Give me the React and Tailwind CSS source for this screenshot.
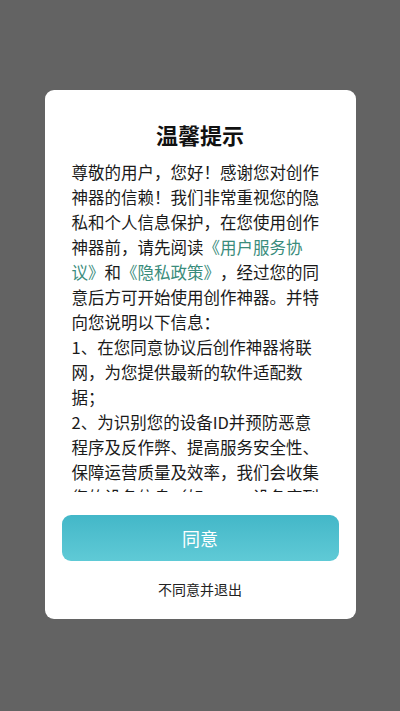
const LINK = "text-[#3a8c7c]";

const lines = [
  ["尊敬的用户，您好！感谢您对创作"],
  ["神器的信赖！我们非常重视您的隐"],
  ["私和个人信息保护，在您使用创作"],
  ["神器前，请先阅读", { link: "《用户服务协" }],
  [{ link: "议》" }, "和", { link: "《隐私政策》" }, "，经过您的同"],
  ["意后方可开始使用创作神器。并特"],
  ["向您说明以下信息："],
  ["1、在您同意协议后创作神器将联"],
  ["网，为您提供最新的软件适配数"],
  ["据；"],
  ["2、为识别您的设备ID并预防恶意"],
  ["程序及反作弊、提高服务安全性、"],
  ["保障运营质量及效率，我们会收集"],
  ["您的设备信息（如IMEI、设备序列"],
];

export default function App() {
  const font = { fontFamily: '"Noto Sans CJK SC", "Noto Sans", sans-serif' };
  return (
    <div className="w-[400px] h-[711px] bg-[#636363] flex justify-center items-start pt-[90px]" style={font}>
      <div className="w-[311px] bg-white rounded-[9px] flex flex-col">
        <h1 className="pt-[30px] text-center text-[22px] leading-[28px] font-bold text-[#111]">温馨提示</h1>
        <div className="mt-[12px] h-[332px] overflow-hidden px-[27px]">
          <div className="text-[16.5px] leading-[25px] text-[#1a1a1a] [text-spacing-trim:space-all]">
            {lines.map((parts, i) => (
              <div key={i} className="whitespace-nowrap">
                {parts.map((p, j) =>
                  typeof p === "string" ? (
                    <span key={j}>{p}</span>
                  ) : (
                    <span key={j} className={LINK}>
                      {p.link}
                    </span>
                  )
                )}
              </div>
            ))}
          </div>
        </div>
        <button className="mt-[23px] mx-[17px] h-[46px] rounded-[9px] bg-linear-to-b from-[#43b7c8] to-[#5fcad6] text-white text-[18px]">
          同意
        </button>
        <button className="mt-[18px] mb-[20px] h-[20px] text-[14px] leading-[20px] text-[#222]">不同意并退出</button>
      </div>
    </div>
  );
}
